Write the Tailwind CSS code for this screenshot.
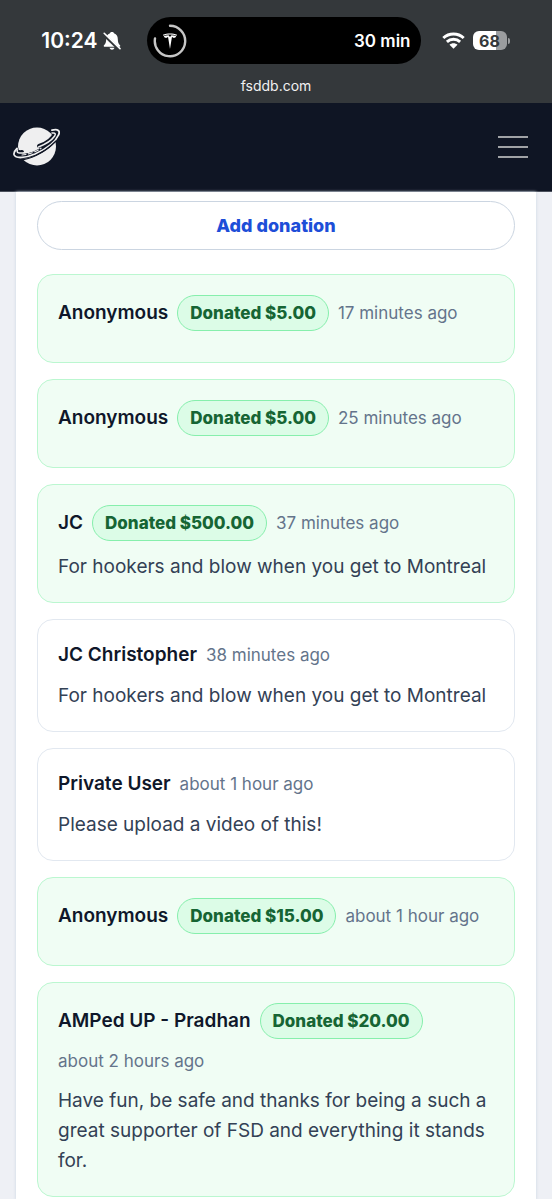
<!DOCTYPE html>
<html lang="en">
<head>
<meta charset="utf-8">
<meta name="viewport" content="width=device-width, initial-scale=1">
<title>fsddb.com</title>
<script src="https://cdn.jsdelivr.net/npm/@tailwindcss/browser@4"></script>
</head>
<body class="flex min-h-screen flex-col bg-[#eef0f5] font-['Inter','Liberation_Sans',sans-serif] text-[19px] leading-[30px] text-[#334155]">

<div class="bg-[#34383b] pt-[17px] text-white">
  <div class="flex h-[47px] items-center pl-[16px] pr-[6px]">
    <div class="flex flex-1 items-center justify-end gap-[5px] pr-[26px]">
      <span class="text-[21px] font-semibold">10:24</span>
      <svg class="h-[20px] w-[18px]" viewBox="0 0 18 20" role="img" aria-label="Silent mode">
        <path fill="#fff" d="M9 1C7.7 1 7 1.700 6.700 2.500C4.500 3.300 3.200 5.300 3.200 8C3.200 11.500 2.300 12.800 1 14.200C.4 15 .8 15.800 1.800 15.800H16.200C17.200 15.800 17.600 15 17 14.200C15.700 12.800 14.800 11.500 14.800 8C14.800 5.300 13.500 3.300 11.300 2.500C11 1.700 10.300 1 9 1ZM6.500 16.800C6.900 18.100 7.800 18.800 9 18.800S11.100 18.100 11.500 16.800Z"/>
        <path stroke="#34383b" stroke-width="3" d="M0 2.800L17 19.200"/>
        <path stroke="#fff" stroke-width="1.600" stroke-linecap="round" d="M1.200 2.300L17 17.600"/>
      </svg>
    </div>
    <div class="flex h-[47px] w-[274px] items-center justify-between rounded-full bg-black pr-[10px] pl-[6px]">
      <svg class="size-[34px]" viewBox="0 0 34 34" role="img" aria-label="Charging progress">
        <path fill="none" stroke="#c6c6c6" stroke-width="2.400" stroke-linecap="round" d="M17 1.800A15.200 15.200 0 1 1 2 14.500"/>
        <path fill="#fff" d="M9.900 10.800C14.200 9 19.800 9 24.100 10.800L23.600 11.700C19.500 10.200 14.500 10.200 10.400 11.700ZM10.800 12.200C12.500 11.500 14.200 11.200 15.600 11.200L17 12.900L18.400 11.200C19.800 11.200 21.500 11.500 23.200 12.200C22.800 13.400 22 13.900 20.600 13.900C20.300 13.400 19.700 13.300 18.900 13.300L17 25L15.100 13.300C14.300 13.300 13.700 13.400 13.400 13.900C12 13.900 11.200 13.400 10.800 12.200Z"/>
      </svg>
      <span class="text-[17px] font-semibold">30 min</span>
    </div>
    <div class="flex flex-1 items-center gap-[8px] pl-[21px]">
      <svg class="h-[17px] w-[23px]" viewBox="0 0 23 17" role="img" aria-label="Wi-Fi">
        <g fill="none" stroke="#fff" stroke-width="2.900">
          <path d="M1.300 6C7 .6 16 .6 21.700 6"/>
          <path d="M4.900 9.900C8.600 6.400 14.400 6.400 18.100 9.900"/>
        </g>
        <path fill="#fff" d="M7.500 12.700C9.800 10.700 13.200 10.700 15.500 12.700L11.500 16.700Z"/>
      </svg>
      <div class="flex items-center gap-px" role="img" aria-label="Battery 68 percent">
        <span class="flex h-[19px] w-[34px] items-center justify-center rounded-[6px] bg-linear-to-r from-white from-68% to-[#9b9d9f] to-68% text-[16px] font-bold text-[#34383b]">68</span>
        <span class="h-[6px] w-[2px] rounded-r-full bg-[#9b9d9f]"></span>
      </div>
    </div>
  </div>
  <div class="flex h-[39px] items-center justify-center pt-[5px] text-[14px] text-[#f1f1f1]">fsddb.com</div>
</div>

<header class="flex h-[89px] items-center justify-between border-b border-[#4a505c] bg-[#0f1524] pr-[24px] pl-[13px]">
  <a href="#" aria-label="Home">
    <svg class="h-[40px] w-[47px]" viewBox="0 0 47 40">
      <circle cx="24" cy="19.500" r="19" fill="#efeff0"/>
      <g fill="none" stroke-linecap="round">
        <path stroke="#0f1524" stroke-width="4" d="M9 25C5 25.500 3 24.500 3.500 22M26 19C33 17 39 13 42.500 6"/>
        <path stroke="#0f1524" stroke-width="5" d="M43.500 9C39 17 31 22.500 22 26.500C14 29.500 6 30 2.500 28"/>
        <path stroke="#efeff0" stroke-width="1.800" d="M39 3.200C45 1.500 47.500 4 45.500 8C42 16 32 22.500 22 27C13 30.800 3 32 1.200 28C.4 26 2 23.500 4 21.500"/>
        <path stroke="#0f1524" stroke-width="1.200" d="M43 14C37 20 30 25 23 28.500C17 31.300 12 32.500 8 32.800"/>
        <path stroke="#efeff0" stroke-width="1.500" d="M39 6C42.500 5.500 43 7 41.500 9.300C38.500 13.500 32 17.500 25.500 20M4.500 23C3 26 6 26.800 12.500 25.500"/>
        <path stroke="#efeff0" stroke-width="1.100" stroke-dasharray="4 2.500" d="M9 28C16 27.500 23 24.500 28 21.500"/>
      </g>
    </svg>
  </a>
  <button type="button" aria-label="Open menu" class="flex w-[30px] flex-col gap-[8px]">
    <span class="h-[2px] bg-[#a0a2a6]"></span>
    <span class="h-[2px] bg-[#a0a2a6]"></span>
    <span class="h-[2px] bg-[#a0a2a6]"></span>
  </button>
</header>

<main class="mx-[16px] flex flex-1 flex-col bg-white px-[21px] pt-[9px] pb-[3px] shadow-[0_0_3px_#cbd5e1]">
  <button type="button" class="h-[49px] rounded-full border border-[#cbd5e1] text-[18px] font-extrabold text-[#1d4ed8]">Add donation</button>

  <ul class="mt-[24px] flex flex-col gap-[16px]">
    <li class="rounded-[16px] border border-[#bbf7d0] bg-[#f0fdf4] p-[20px]">
      <div class="flex flex-wrap items-center gap-[9px]">
        <strong class="font-semibold text-[#0f172a]">Anonymous</strong>
        <span class="flex h-[36px] items-center rounded-full border border-[#86efac] bg-[#dcfce7] px-[12px] text-[17px] font-extrabold text-[#166534]">Donated $5.00</span>
        <time class="text-[17px] leading-[27px] text-[#64748b]">17 minutes ago</time>
      </div>
      <p class="mt-[11px]"></p>
    </li>
    <li class="rounded-[16px] border border-[#bbf7d0] bg-[#f0fdf4] p-[20px]">
      <div class="flex flex-wrap items-center gap-[9px]">
        <strong class="font-semibold text-[#0f172a]">Anonymous</strong>
        <span class="flex h-[36px] items-center rounded-full border border-[#86efac] bg-[#dcfce7] px-[12px] text-[17px] font-extrabold text-[#166534]">Donated $5.00</span>
        <time class="text-[17px] leading-[27px] text-[#64748b]">25 minutes ago</time>
      </div>
      <p class="mt-[11px]"></p>
    </li>
    <li class="rounded-[16px] border border-[#bbf7d0] bg-[#f0fdf4] p-[20px]">
      <div class="flex flex-wrap items-center gap-[9px]">
        <strong class="font-semibold text-[#0f172a]">JC</strong>
        <span class="flex h-[36px] items-center rounded-full border border-[#86efac] bg-[#dcfce7] px-[12px] text-[17px] font-extrabold text-[#166534]">Donated $500.00</span>
        <time class="text-[17px] leading-[27px] text-[#64748b]">37 minutes ago</time>
      </div>
      <p class="mt-[11px]">For hookers and blow when you get to Montreal</p>
    </li>
    <li class="rounded-[16px] border border-[#e2e8f0] bg-white p-[20px]">
      <div class="flex flex-wrap items-center gap-[9px]">
        <strong class="font-semibold text-[#0f172a]">JC Christopher</strong>
        <time class="text-[17px] leading-[27px] text-[#64748b]">38 minutes ago</time>
      </div>
      <p class="mt-[11px]">For hookers and blow when you get to Montreal</p>
    </li>
    <li class="rounded-[16px] border border-[#e2e8f0] bg-white p-[20px]">
      <div class="flex flex-wrap items-center gap-[9px]">
        <strong class="font-semibold text-[#0f172a]">Private User</strong>
        <time class="text-[17px] leading-[27px] text-[#64748b]">about 1 hour ago</time>
      </div>
      <p class="mt-[11px]">Please upload a video of this!</p>
    </li>
    <li class="rounded-[16px] border border-[#bbf7d0] bg-[#f0fdf4] p-[20px]">
      <div class="flex flex-wrap items-center gap-[9px]">
        <strong class="font-semibold text-[#0f172a]">Anonymous</strong>
        <span class="flex h-[36px] items-center rounded-full border border-[#86efac] bg-[#dcfce7] px-[12px] text-[17px] font-extrabold text-[#166534]">Donated $15.00</span>
        <time class="text-[17px] leading-[27px] text-[#64748b]">about 1 hour ago</time>
      </div>
      <p class="mt-[11px]"></p>
    </li>
    <li class="rounded-[16px] border border-[#bbf7d0] bg-[#f0fdf4] p-[20px]">
      <div class="flex flex-wrap items-center gap-[9px]">
        <strong class="font-semibold text-[#0f172a]">AMPed UP - Pradhan</strong>
        <span class="flex h-[36px] items-center rounded-full border border-[#86efac] bg-[#dcfce7] px-[12px] text-[17px] font-extrabold text-[#166534]">Donated $20.00</span>
        <time class="text-[17px] leading-[27px] text-[#64748b]">about 2 hours ago</time>
      </div>
      <p class="mt-[11px]">Have fun, be safe and thanks for being a such a great supporter of FSD and everything it stands for.</p>
    </li>
  </ul>
</main>
</body>
</html>
